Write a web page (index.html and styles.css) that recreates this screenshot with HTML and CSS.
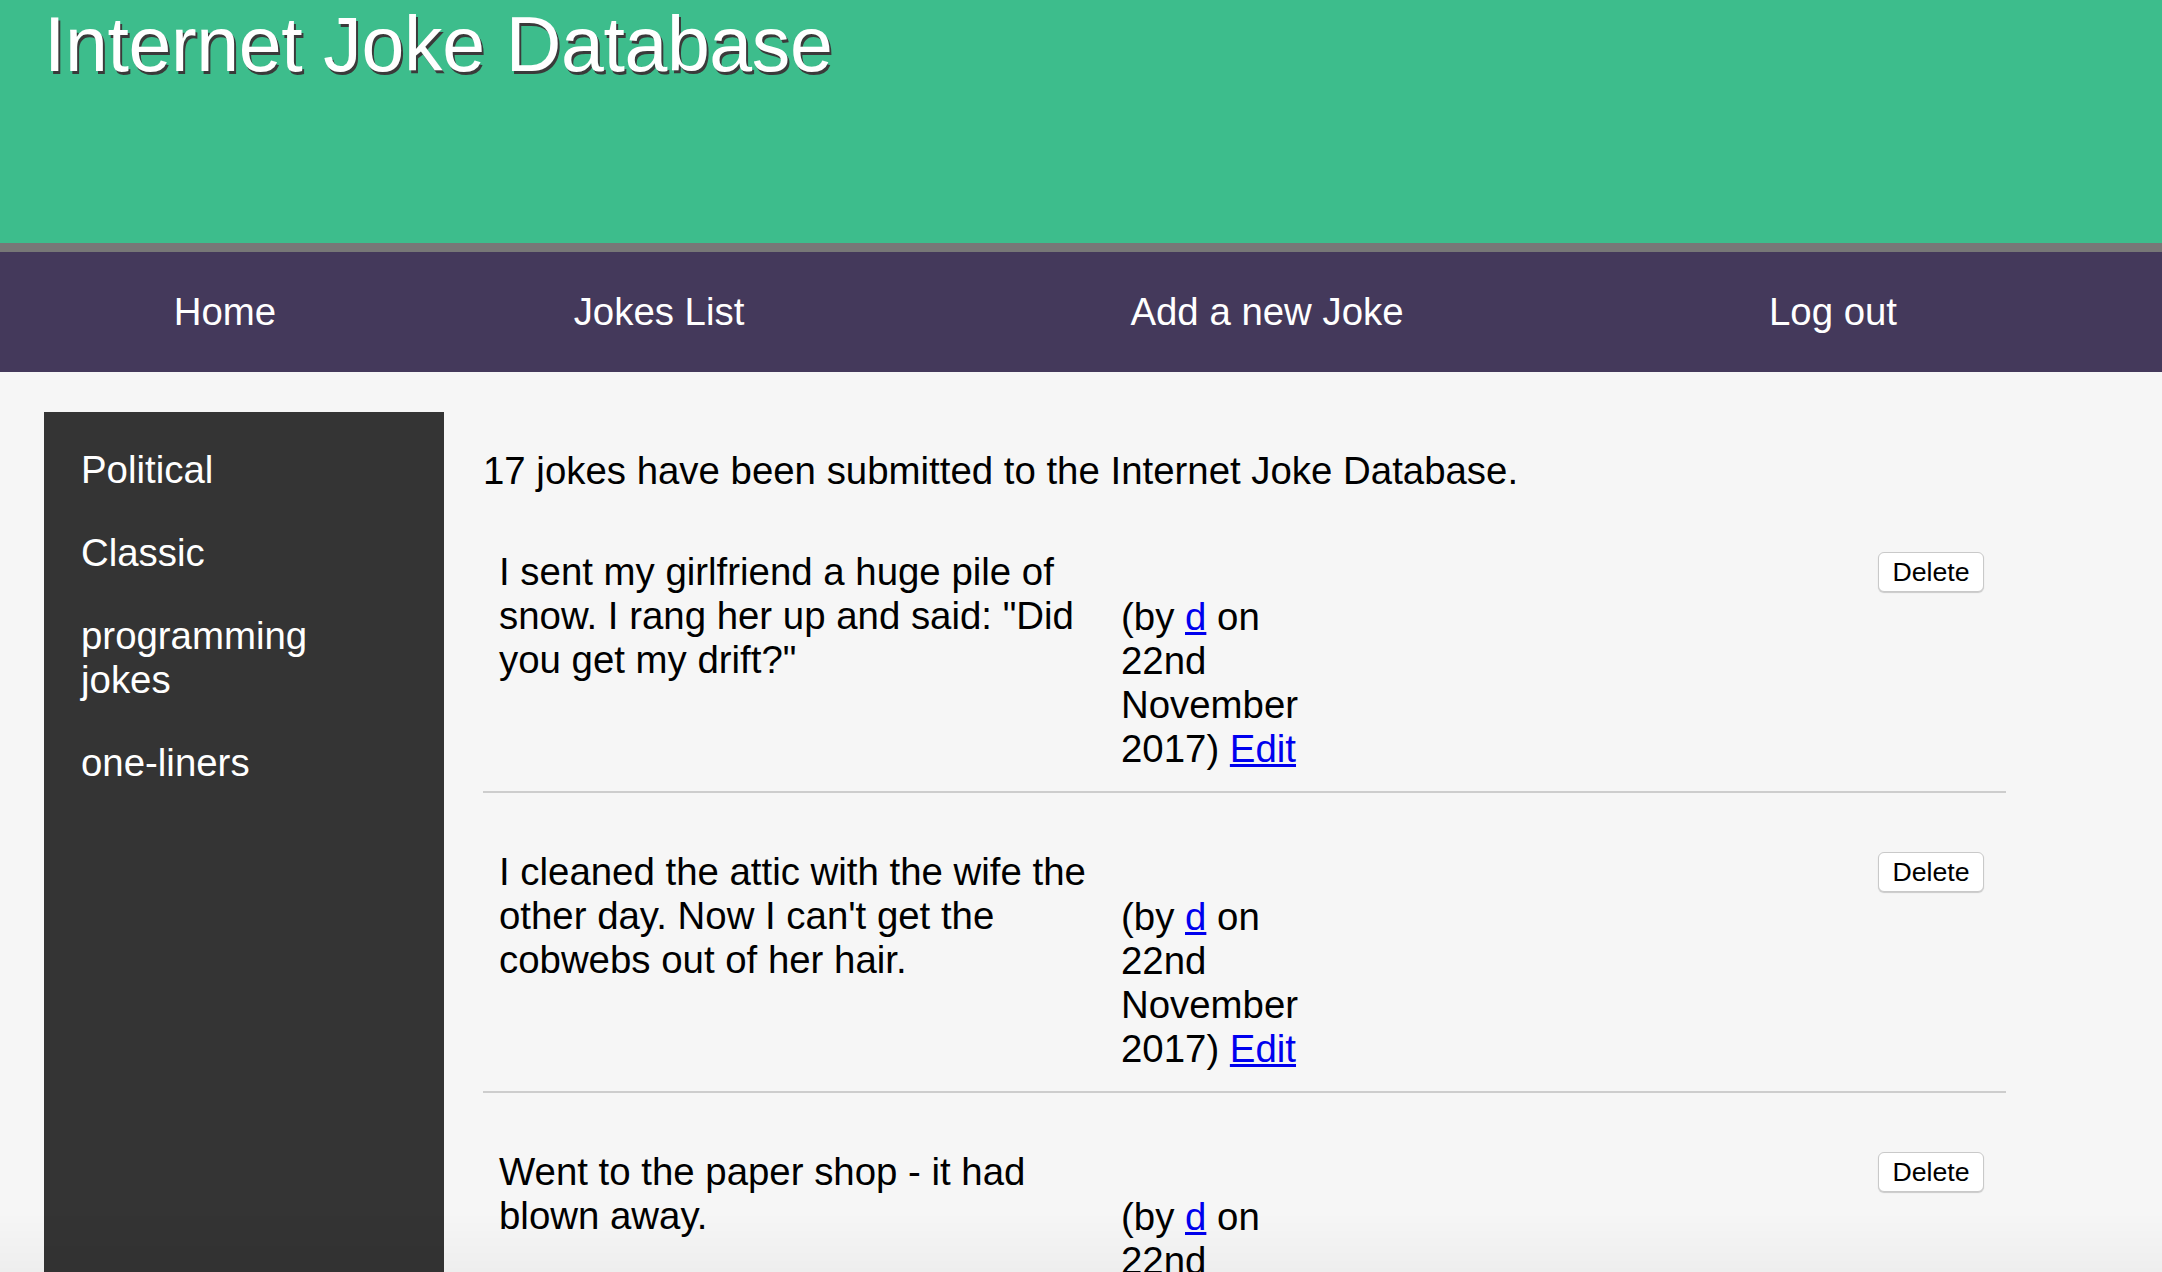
FILE: index.html
```html
<!DOCTYPE html>
<html>
<head>
<meta charset="utf-8">
<title>Internet Joke Database</title>
<link rel="stylesheet" href="styles.css">
</head>
<body>
<header class="site-header">
  <h1 class="site-title">Internet Joke Database</h1>
</header>
<nav class="main-nav">
  <a class="nav-link" href="#">Home</a>
  <a class="nav-link" href="#">Jokes List</a>
  <a class="nav-link" href="#">Add a new Joke</a>
  <a class="nav-link" href="#">Log out</a>
</nav>
<main class="layout">
  <aside class="categories">
    <ul class="cat-list">
      <li class="cat-item"><a class="cat-link" href="#">Political</a></li>
      <li class="cat-item"><a class="cat-link" href="#">Classic</a></li>
      <li class="cat-item"><a class="cat-link" href="#">programming jokes</a></li>
      <li class="cat-item"><a class="cat-link" href="#">one-liners</a></li>
    </ul>
  </aside>
  <section class="content">
    <p class="summary">17 jokes have been submitted to the Internet Joke Database.</p>

    <div class="joke">
      <p class="joke-text">I sent my girlfriend a huge pile of snow. I rang her up and said: "Did you get my drift?"</p>
      <p class="joke-meta">(by <a href="#">d</a> on 22nd November 2017) <a href="#">Edit</a></p>
      <form class="joke-form"><button class="delete-btn" type="button">Delete</button></form>
    </div>

    <div class="joke">
      <p class="joke-text">I cleaned the attic with the wife the other day. Now I can't get the cobwebs out of her hair.</p>
      <p class="joke-meta">(by <a href="#">d</a> on 22nd November 2017) <a href="#">Edit</a></p>
      <form class="joke-form"><button class="delete-btn" type="button">Delete</button></form>
    </div>

    <div class="joke">
      <p class="joke-text">Went to the paper shop - it had blown away.</p>
      <p class="joke-meta">(by <a href="#">d</a> on 22nd November 2017) <a href="#">Edit</a></p>
      <form class="joke-form"><button class="delete-btn" type="button">Delete</button></form>
    </div>
  </section>
</main>
<div class="bottom-fade"></div>
</body>
</html>
```

FILE: styles.css
```css
html, body {
  margin: 0;
  padding: 0;
}

body {
  background: #f6f6f6;
  color: #000;
  font-family: "Liberation Sans", Arial, Helvetica, sans-serif;
  font-size: 38.4px;
  line-height: 44px;
}

.site-header {
  background: #3dbd8c;
  height: 243px;
  border-bottom: 9px solid #777777;
}

.site-title {
  margin: 0;
  padding-left: 44px;
  font-size: 77px;
  letter-spacing: -0.35px;
  line-height: 88px;
  font-weight: normal;
  color: #ffffff;
  text-shadow: 2px 3px 0 #3a3a3a;
}

.main-nav {
  background: #44395b;
  height: 120px;
  display: grid;
  grid-template-columns: 450px 418px 798px 334px;
  align-items: center;
}

.nav-link {
  color: #ffffff;
  text-decoration: none;
  text-align: center;
}

.layout {
  display: flex;
  align-items: flex-start;
  padding: 40px 156px 0 44px;
}

.categories {
  width: 400px;
  flex: none;
  box-sizing: border-box;
  background: #343434;
  min-height: 1000px;
  padding: 36px 60px 0 37px;
}

.cat-list {
  list-style: none;
  margin: 0;
  padding: 0;
}

.cat-item {
  margin-bottom: 39px;
}

.cat-link {
  color: #ffffff;
  text-decoration: none;
}

.content {
  flex: 1;
  margin-left: 39px;
  padding-top: 37px;
}

.summary {
  margin: 0 0 37px;
}

.joke {
  display: flex;
  align-items: flex-start;
  padding: 20px 22px 20px 16px;
  margin-bottom: 37px;
  border-bottom: 2px solid #cdcdcd;
}

.joke-text {
  margin: 0;
  width: 611px;
  flex: none;
}

.joke-meta {
  margin: 0 0 0 11px;
  padding-top: 45px;
  width: 200px;
  flex: none;
}

.joke-meta a {
  color: #0000ee;
}

.joke-form {
  margin: 2px 0 0 auto;
}

.delete-btn {
  display: block;
  width: 106px;
  height: 40px;
  padding: 0;
  background: #ffffff;
  border: 1px solid #c9c9c9;
  border-radius: 6px;
  box-shadow: 0 1px 1px rgba(0, 0, 0, 0.18);
  font-family: "Liberation Sans", Arial, Helvetica, sans-serif;
  font-size: 26.7px;
  color: #000;
}

.bottom-fade {
  position: fixed;
  left: 0;
  right: 0;
  bottom: 0;
  height: 60px;
  pointer-events: none;
  background: linear-gradient(to bottom, rgba(0, 0, 0, 0), rgba(0, 0, 0, 0.03));
}
```
